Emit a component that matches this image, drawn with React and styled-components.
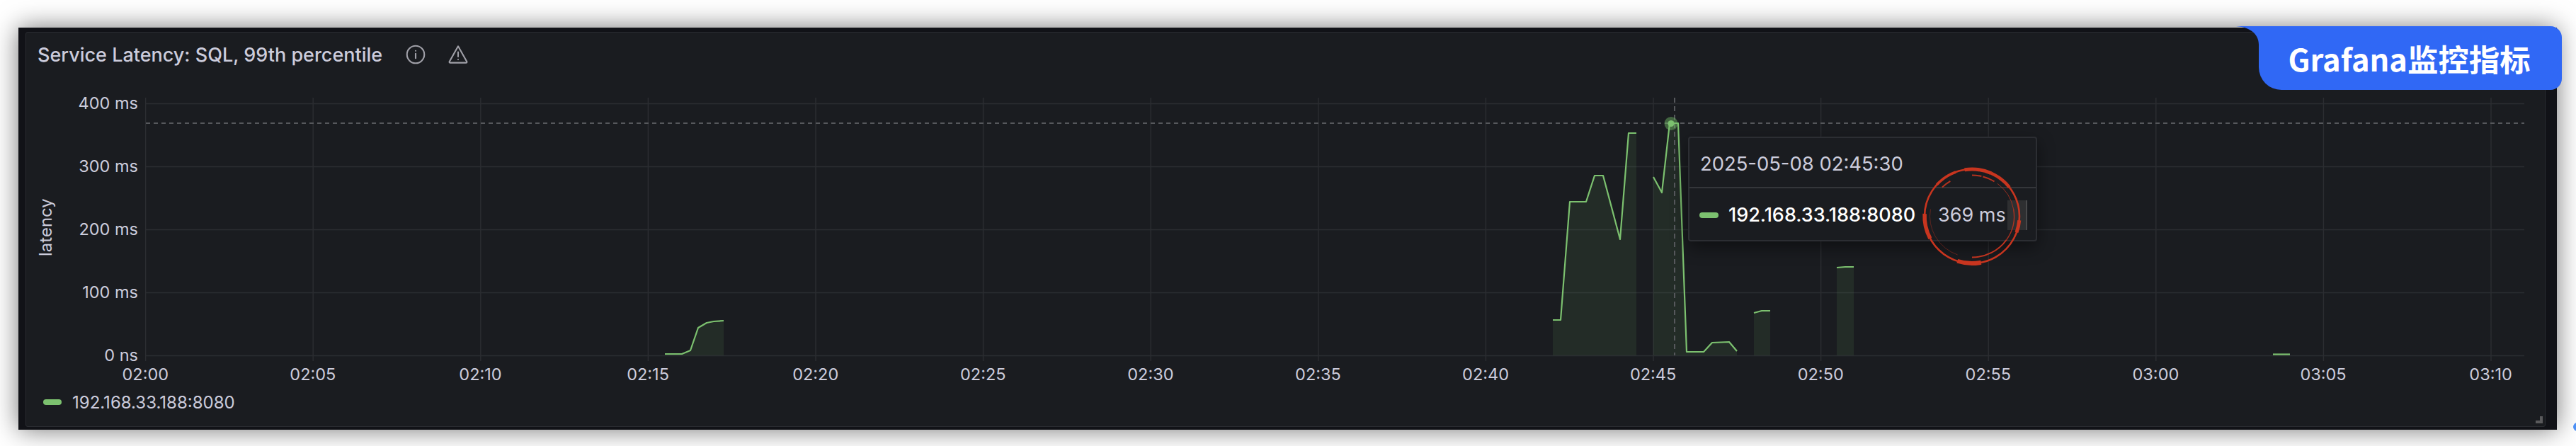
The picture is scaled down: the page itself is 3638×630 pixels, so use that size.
import React from 'react';
import styled, { createGlobalStyle } from 'styled-components';

const GlobalStyle = createGlobalStyle`
  html, body {
    margin: 0;
    padding: 0;
    background: #ffffff;
  }
`;

const Page = styled.div`
  position: relative;
  width: 3638px;
  height: 630px;
  padding: 39px 27px 23px 26px;
  box-sizing: border-box;
  overflow: hidden;
  background: #ffffff;
  font-family: Inter, "Noto Sans CJK SC", sans-serif;
`;

const Frame = styled.div`
  height: 100%;
  box-sizing: border-box;
  padding: 6px 16px 4px 10px;
  background: #111217;
  box-shadow: 0 0 34px rgba(0, 0, 0, 0.55);
`;

const Panel = styled.section`
  position: relative;
  height: 100%;
  box-sizing: border-box;
  border: 1px solid #2a2c31;
  border-radius: 3px;
  background: #1a1c20;
  color: #ccccdc;
`;

const Header = styled.header`
  display: flex;
  align-items: center;
  height: 55px;
  padding: 7px 0 0 16px;
  box-sizing: border-box;
`;

const Title = styled.h2`
  margin: 0 33px 0 0;
  font-size: 27px;
  font-weight: 500;
  color: #ccccdc;
`;

const HeaderIcon = styled.svg`
  width: 28px;
  height: 28px;
  margin-right: 32px;
  fill: none;
  stroke: #a0a0a8;
  stroke-width: 1.8;
  stroke-linecap: round;
  stroke-linejoin: round;
`;

const ChartRow = styled.div`
  display: flex;
  align-items: flex-start;
  height: 410px;
`;

const AxisName = styled.div`
  width: 41px;
  height: 382px;
  margin: 29px 0 0 7px;
  display: flex;
  align-items: center;
  justify-content: center;
  writing-mode: vertical-rl;
  transform: rotate(180deg);
  font-size: 24px;
`;

const YLabels = styled.div`
  width: 110px;
`;

const YLabel = styled.div`
  height: 89px;
  line-height: 89px;
  text-align: right;
  font-size: 23.5px;
  white-space: nowrap;
`;

const Plot = styled.svg`
  display: block;
  margin: 29px 0 0 10px;
  flex: none;
`;

const XLabels = styled.div`
  display: flex;
  height: 36px;
  margin-left: 50px;
`;

const XLabel = styled.div`
  flex: none;
  width: 236.6px;
  line-height: 36px;
  text-align: center;
  font-size: 23.5px;
`;

const Legend = styled.div`
  display: flex;
  align-items: center;
  gap: 15px;
  height: 34px;
  margin-top: 4px;
  padding-left: 24px;
  font-size: 24px;
`;

const Swatch = styled.span`
  display: block;
  flex: none;
  width: ${(p) => p.$width}px;
  height: 8px;
  border-radius: 4px;
  background: #7cc16f;
`;

const Tooltip = styled.div`
  position: absolute;
  left: 2347px;
  top: 147px;
  width: 493px;
  height: 148px;
  box-sizing: border-box;
  border: 2px solid #2c2e33;
  border-radius: 4px;
  background: #1a1c20;
  box-shadow: 0 8px 24px rgba(0, 0, 0, 0.45);
`;

const TooltipHead = styled.div`
  height: 71px;
  padding-left: 15px;
  line-height: 72px;
  box-sizing: border-box;
  border-bottom: 2px solid #34363a;
  font-size: 27.4px;
  color: #ccccdc;
`;

const TooltipRow = styled.div`
  display: flex;
  align-items: center;
  height: 75px;
  padding-left: 14px;
`;

const SeriesName = styled.span`
  margin-left: 14px;
  font-size: 27px;
  font-weight: 500;
  white-space: nowrap;
  color: #ffffff;
`;

const SeriesValue = styled.span`
  margin-left: 32px;
  font-size: 27px;
  white-space: nowrap;
  color: #ccccdc;
`;

const ScrollStub = styled.span`
  display: block;
  flex: none;
  width: 28px;
  height: 42px;
  margin-left: 2px;
  box-sizing: border-box;
  background: #2e2f31;
  border-right: 2px solid #48494b;
`;

const RedCircle = styled.svg`
  position: absolute;
  left: 2673px;
  top: 184px;
  width: 150px;
  height: 150px;
  fill: none;
`;

const Badge = styled.div`
  position: absolute;
  top: 37px;
  right: 20px;
  width: 428px;
  height: 90px;
  display: flex;
  align-items: center;
  justify-content: center;
  padding-right: 3px;
  box-sizing: border-box;
  border-radius: 0 16px 16px 32px;
  background: #3068f5;
  color: #ffffff;
  font-family: "Noto Sans CJK SC", sans-serif;
  font-size: 43.4px;
  font-weight: 700;
`;

const BadgeFillet = styled.svg`
  position: absolute;
  top: 0;
  left: -36px;
  width: 36px;
  height: 26px;
  fill: #3068f5;
`;

const ResizeHandle = styled.svg`
  position: absolute;
  right: 3px;
  bottom: 4px;
  width: 10px;
  height: 10px;
  fill: #5a5a5c;
`;

const EdgeDot = styled.span`
  position: absolute;
  left: 3634px;
  top: 597px;
  width: 12px;
  height: 12px;
  border-radius: 50%;
  background: #4d90f5;
`;

const ticks = ['02:00', '02:05', '02:10', '02:15', '02:20', '02:25', '02:30', '02:35', '02:40', '02:45', '02:50', '02:55', '03:00', '03:05', '03:10'];
const yTicks = ['400 ms', '300 ms', '200 ms', '100 ms', '0 ns'];
const hLines = [146, 235, 324, 413, 502];

// plot coordinates are page pixels, the viewBox below maps them 1:1
const segments = [
  [[939, 500], [963, 500], [975, 495], [986, 463], [998, 456], [1008, 454], [1022, 453]],
  [[2193, 452], [2204, 452], [2217, 285], [2240, 285], [2252, 248], [2264, 248], [2288, 338], [2300, 188], [2311, 188]],
  [[2335, 250], [2347, 272], [2358, 174], [2370, 174], [2382, 497], [2406, 497], [2418, 484], [2442, 483], [2453, 496]],
  [[2477, 442], [2488, 439], [2500, 439]],
  [[2594, 378], [2606, 377], [2618, 377]],
  [[3210, 500.5], [3234, 500.5]],
];

const toLine = (pts) => pts.map((p) => p.join(',')).join(' ');
const toArea = (pts) => `${pts[0][0]},502 ${toLine(pts)} ${pts[pts.length - 1][0]},502`;

const Chart = () => (
  <Plot width={3365} height={382} viewBox="205 130 3365 382">
    {hLines.map((y) => (
      <line key={y} x1={205} x2={3565} y1={y + 0.5} y2={y + 0.5} stroke="#2b2d31" strokeWidth={1.5} />
    ))}
    {ticks.map((t, i) => {
      const x = 205.6 + i * 236.6;
      return <line key={t} x1={x} x2={x} y1={138} y2={510} stroke="#2b2d31" strokeWidth={1.5} />;
    })}
    <line x1={206} x2={3565} y1={174} y2={174} stroke="#56585c" strokeWidth={2} strokeDasharray="6 5" />
    {segments.map((s, i) => (
      <polygon key={i} points={toArea(s)} fill="#73bf69" fillOpacity={0.1} />
    ))}
    <line x1={2365} x2={2365} y1={138} y2={502} stroke="#56585c" strokeWidth={2} strokeDasharray="7 5" />
    {segments.map((s, i) => (
      <polyline key={i} points={toLine(s)} fill="none" stroke="#7cc16f" strokeWidth={2.2} strokeLinejoin="round" />
    ))}
    <circle cx={2360} cy={174.5} r={9.5} fill="#73bf69" fillOpacity={0.45} />
    <circle cx={2360} cy={174.5} r={4.5} fill="#7cc16f" />
  </Plot>
);

// the hand drawn ring: arcs given in degrees, clockwise from 3 o'clock
const arc = (rx, ry, from, to) => {
  const rad = (d) => (d * Math.PI) / 180;
  const x0 = 75 + rx * Math.cos(rad(from));
  const y0 = 75.5 + ry * Math.sin(rad(from));
  const x1 = 75 + rx * Math.cos(rad(to));
  const y1 = 75.5 + ry * Math.sin(rad(to));
  const large = to - from > 180 ? 1 : 0;
  return `M${x0} ${y0} A${rx} ${ry} 0 ${large} 1 ${x1} ${y1}`;
};

const ringArcs = [
  [67, 66.5, 0, 359.9, 2.6, 1],
  [67, 66.5, 152, 183, 5.5, 1],
  [67, 66.5, 222, 250, 3.6, 1],
  [67, 66.5, 261, 294, 5, 1],
  [67, 66.5, 294, 322, 4.5, 1],
  [67, 66.5, 79, 108, 6, 1],
  [67, 66.5, 5, 20, 5, 1],
  [59.5, 58, 110, 190, 1, 0.4],
  [59.5, 58, 35, 90, 2, 0.95],
  [59.5, 58, 225, 239, 2, 0.9],
  [59.5, 58, 270, 283, 2.2, 0.9],
  [59.5, 58, 285, 302, 2, 0.9],
  [59.5, 58, 307, 350, 1, 0.7],
  [59.5, 58, 350, 395, 1.4, 0.8],
];

const App = () => (
  <Page>
    <GlobalStyle />
    <Frame>
      <Panel>
        <Header>
          <Title>Service Latency: SQL, 99th percentile</Title>
          <HeaderIcon viewBox="0 0 24 24">
            <circle cx="12" cy="12" r="10.5" />
            <line x1="12" y1="11" x2="12" y2="16.5" />
            <line x1="12" y1="7.5" x2="12" y2="7.6" />
          </HeaderIcon>
          <HeaderIcon viewBox="0 0 24 24">
            <path d="M12 2 L22.5 20.5 Q23 22 21.5 22 H2.5 Q1 22 1.5 20.5 Z" />
            <line x1="12" y1="9" x2="12" y2="14.5" />
            <line x1="12" y1="18" x2="12" y2="18.1" />
          </HeaderIcon>
        </Header>
        <ChartRow>
          <AxisName>latency</AxisName>
          <YLabels>
            {yTicks.map((t) => (
              <YLabel key={t}>{t}</YLabel>
            ))}
          </YLabels>
          <Chart />
        </ChartRow>
        <XLabels>
          {ticks.map((t) => (
            <XLabel key={t}>{t}</XLabel>
          ))}
        </XLabels>
        <Legend>
          <Swatch $width={26} />
          192.168.33.188:8080
        </Legend>
        <Tooltip>
          <TooltipHead>2025-05-08 02:45:30</TooltipHead>
          <TooltipRow>
            <Swatch $width={27} />
            <SeriesName>192.168.33.188:8080</SeriesName>
            <SeriesValue>369 ms</SeriesValue>
            <ScrollStub />
          </TooltipRow>
        </Tooltip>
        <RedCircle viewBox="0 0 150 150">
          {ringArcs.map(([rx, ry, from, to, w, o], i) => (
            <path key={i} d={arc(rx, ry, from, to)} stroke="#c8351f" strokeWidth={w} strokeOpacity={o} />
          ))}
        </RedCircle>
        <ResizeHandle viewBox="0 0 10 10">
          <path d="M6 0 H10 V10 H0 V6 H6 Z" />
        </ResizeHandle>
      </Panel>
    </Frame>
    <Badge>
      <BadgeFillet viewBox="0 0 36 26">
        <path d="M0 0 H36 V26 C36 10 22 0 0 0 Z" />
      </BadgeFillet>
      Grafana监控指标
    </Badge>
    <EdgeDot />
  </Page>
);

export default App;
